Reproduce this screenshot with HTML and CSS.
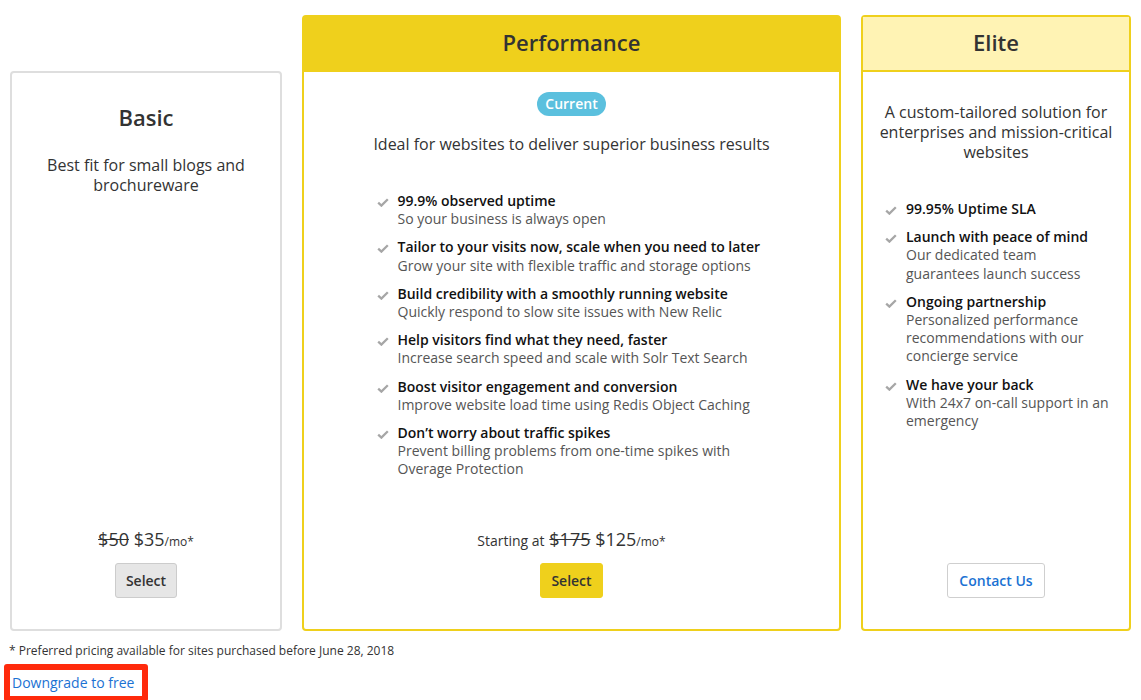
FILE: index.html
```html
<!DOCTYPE html>
<html lang="en">
<head>
<meta charset="utf-8">
<title>Plans</title>
<link rel="stylesheet" href="styles.css">
</head>
<body>
<div class="plans">
  <div class="plan plan-basic">
    <div class="plan-body">
      <h2 class="plan-name">Basic</h2>
      <p class="plan-desc">Best fit for small blogs and brochureware</p>
      <div class="plan-foot">
        <div class="price"><s>$50</s> $35<span class="per">/mo*</span></div>
        <button class="btn btn-default">Select</button>
      </div>
    </div>
  </div>

  <div class="plan plan-perf">
    <div class="plan-head"><h2 class="plan-name">Performance</h2></div>
    <div class="plan-body">
      <span class="badge">Current</span>
      <p class="plan-desc">Ideal for websites to deliver superior business results</p>
      <ul class="features">
        <li><svg class="check" viewBox="0 0 12 9"><path d="M1.2 4.6 L4.4 7.6 L10.8 1.2"/></svg><div><span class="ft-title">99.9% observed uptime</span><span class="ft-desc">So your business is always open</span></div></li>
        <li><svg class="check" viewBox="0 0 12 9"><path d="M1.2 4.6 L4.4 7.6 L10.8 1.2"/></svg><div><span class="ft-title">Tailor to your visits now, scale when you need to later</span><span class="ft-desc">Grow your site with flexible traffic and storage options</span></div></li>
        <li><svg class="check" viewBox="0 0 12 9"><path d="M1.2 4.6 L4.4 7.6 L10.8 1.2"/></svg><div><span class="ft-title">Build credibility with a smoothly running website</span><span class="ft-desc">Quickly respond to slow site issues with New Relic</span></div></li>
        <li><svg class="check" viewBox="0 0 12 9"><path d="M1.2 4.6 L4.4 7.6 L10.8 1.2"/></svg><div><span class="ft-title">Help visitors find what they need, faster</span><span class="ft-desc">Increase search speed and scale with Solr Text Search</span></div></li>
        <li><svg class="check" viewBox="0 0 12 9"><path d="M1.2 4.6 L4.4 7.6 L10.8 1.2"/></svg><div><span class="ft-title">Boost visitor engagement and conversion</span><span class="ft-desc">Improve website load time using Redis Object Caching</span></div></li>
        <li><svg class="check" viewBox="0 0 12 9"><path d="M1.2 4.6 L4.4 7.6 L10.8 1.2"/></svg><div><span class="ft-title">Don’t worry about traffic spikes</span><span class="ft-desc">Prevent billing problems from one-time spikes with Overage Protection</span></div></li>
      </ul>
      <div class="plan-foot">
        <div class="price"><span class="lead">Starting at</span> <s>$175</s> $125<span class="per">/mo*</span></div>
        <button class="btn btn-primary">Select</button>
      </div>
    </div>
  </div>

  <div class="plan plan-elite">
    <div class="plan-head"><h2 class="plan-name">Elite</h2></div>
    <div class="plan-body">
      <p class="plan-desc">A custom-tailored solution for enterprises and mission-critical websites</p>
      <ul class="features">
        <li><svg class="check" viewBox="0 0 12 9"><path d="M1.2 4.6 L4.4 7.6 L10.8 1.2"/></svg><div><span class="ft-title">99.95% Uptime SLA</span></div></li>
        <li><svg class="check" viewBox="0 0 12 9"><path d="M1.2 4.6 L4.4 7.6 L10.8 1.2"/></svg><div><span class="ft-title">Launch with peace of mind</span><span class="ft-desc">Our dedicated team guarantees launch success</span></div></li>
        <li><svg class="check" viewBox="0 0 12 9"><path d="M1.2 4.6 L4.4 7.6 L10.8 1.2"/></svg><div><span class="ft-title">Ongoing partnership</span><span class="ft-desc">Personalized performance recommendations with our concierge service</span></div></li>
        <li><svg class="check" viewBox="0 0 12 9"><path d="M1.2 4.6 L4.4 7.6 L10.8 1.2"/></svg><div><span class="ft-title">We have your back</span><span class="ft-desc">With 24x7 on-call support in an emergency</span></div></li>
      </ul>
      <div class="plan-foot">
        <button class="btn btn-outline">Contact Us</button>
      </div>
    </div>
  </div>
</div>

<p class="foot-note">* Preferred pricing available for sites purchased before June 28, 2018</p>
<div class="downgrade-row"><a class="downgrade" href="#">Downgrade to free</a></div>
</body>
</html>
```

FILE: styles.css
```css
html, body {
  margin: 0;
  padding: 0;
  background: #fff;
}

body {
  font-family: "Open Sans", "Liberation Sans", sans-serif;
  color: #333;
}

.plans {
  display: grid;
  grid-template-columns: 272px 539px 270px;
  column-gap: 20px;
  padding: 15px 10px 0;
  align-items: stretch;
}

.plan {
  display: flex;
  flex-direction: column;
  border: 2px solid #efd01c;
  border-radius: 4px;
  background: #fff;
  min-width: 0;
}

.plan-basic {
  border-color: #dedede;
  margin-top: 56px;
}

.plan-head {
  padding: 10px 0 13px;
  border-bottom: 2px solid #efd01c;
  text-align: center;
}

.plan-perf .plan-head {
  background: #efd01c;
}

.plan-elite .plan-head {
  background: #fff3b4;
}

.plan-name {
  margin: 0;
  font-size: 22px;
  line-height: 30px;
  font-weight: 600;
  color: #333;
  text-align: center;
}

.plan-body {
  flex: 1;
  display: flex;
  flex-direction: column;
  padding: 30px 15px 31px;
  text-align: center;
}

.plan-basic .plan-body {
  padding-top: 29px;
}

.plan-perf .plan-body {
  padding-top: 20px;
}

.badge {
  align-self: center;
  padding: 2px 8px;
  font-size: 14px;
  line-height: 20px;
  font-weight: 600;
  color: #fff;
  background: #5bc0de;
  border-radius: 12px;
}

.plan-desc {
  margin: 23px 0 0;
  font-size: 16px;
  line-height: 20px;
  color: #333;
}

.plan-perf .plan-desc {
  margin-top: 18px;
}

.plan-elite .plan-desc {
  margin-top: 0;
}

.features {
  list-style: none;
  margin: 38px auto 48px;
  padding: 0 4px 0 7px;
  max-width: 404px;
  width: 100%;
  box-sizing: border-box;
  text-align: left;
}

.features li {
  display: flex;
  gap: 9px;
  margin-bottom: 10px;
  font-size: 14px;
  line-height: 18.2px;
}

.features li:last-child {
  margin-bottom: 0;
}

.check {
  flex: none;
  width: 12px;
  height: 9px;
  margin-top: 6px;
  fill: none;
  stroke: #a6a6a6;
  stroke-width: 2.3;
}

.ft-title {
  display: block;
  font-weight: 600;
  color: #111;
}

.ft-desc {
  display: block;
  color: #555;
}

.plan-foot {
  margin-top: auto;
}

.price {
  font-size: 18px;
  line-height: 24px;
  color: #333;
}

.price .lead {
  font-size: 14px;
}

.price .per {
  font-size: 12px;
}

.btn {
  display: block;
  margin: 9px auto 0;
  height: 35px;
  padding: 0 10px;
  font-family: "Open Sans", "Liberation Sans", sans-serif;
  font-size: 14px;
  font-weight: 600;
  border-radius: 3px;
  border: 1px solid #ccc;
  cursor: pointer;
}

.btn-default {
  background: #e6e6e6;
  color: #333;
}

.btn-primary {
  background: #efd01c;
  border-color: #efd01c;
  color: #333;
}

.btn-outline {
  background: #fff;
  border-color: #cfcfcf;
  color: #1b72d3;
  padding: 0 11px;
}

.foot-note {
  margin: 11px 0 0 9px;
  font-size: 12px;
  line-height: 18px;
  color: #333;
}

.downgrade-row {
  margin: 4px 0 0 4px;
}

.downgrade {
  display: inline-block;
  border: 6px solid #ff2a0c;
  border-radius: 3px;
  padding: 3px 8px 3px 2px;
  font-size: 14px;
  line-height: 20px;
  color: #1b72d3;
  text-decoration: none;
}
```
